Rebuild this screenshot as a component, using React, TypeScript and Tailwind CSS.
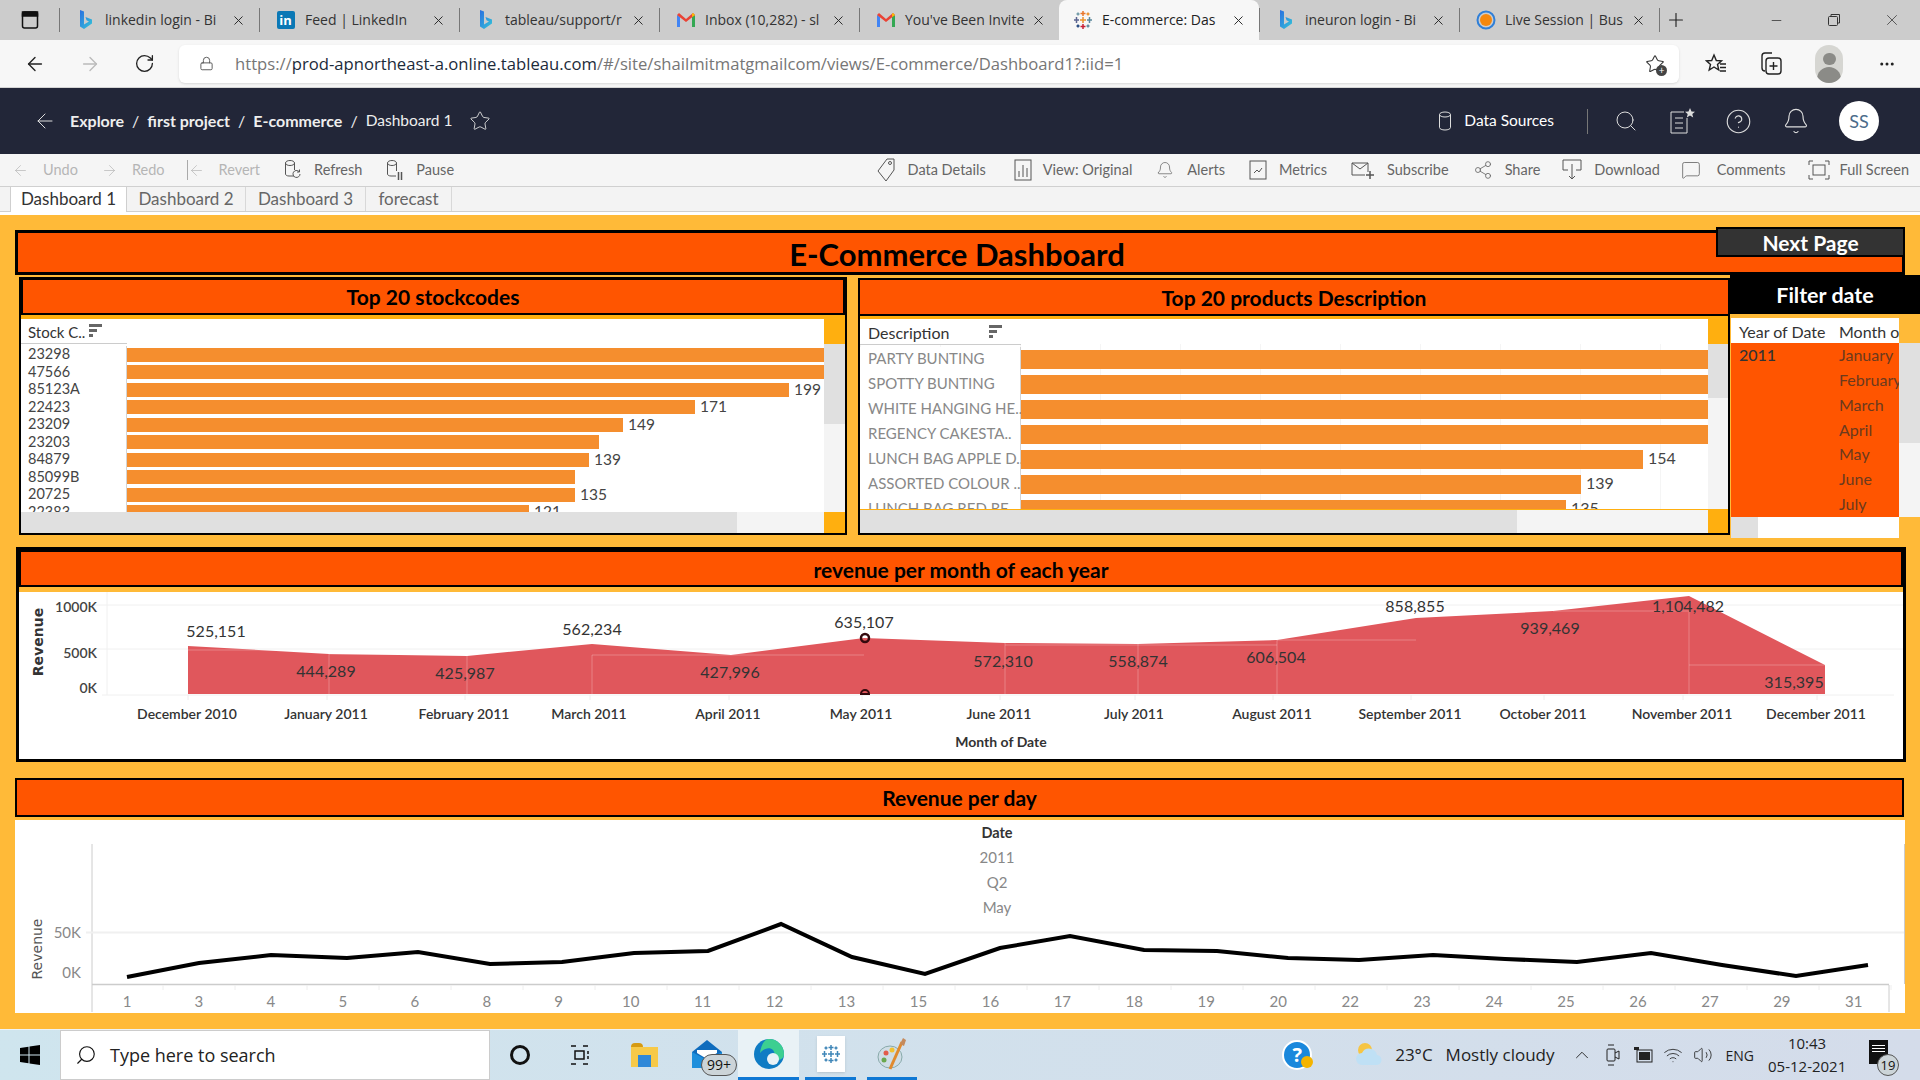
import React from "react";
import {
  ArrowLeft,
  ArrowRight,
  Bell,
  CircleHelp,
  Ellipsis,
  Lock,
  Minus,
  Plus,
  RotateCw,
  Search,
  Star,
  X,
  MessageSquare,
  Share2,
  ChevronUp,
  Volume2,
  Wifi,
} from "lucide-react";

const browserFont = { fontFamily: '"Open Sans", sans-serif' };

const BingIcon = () => (
  <svg width="16" height="22" viewBox="0 0 16 22">
    <defs>
      <linearGradient id="bing" x1="0" y1="0" x2="1" y2="1">
        <stop offset="0" stopColor="#2a6fe0" />
        <stop offset="1" stopColor="#35c6d8" />
      </linearGradient>
    </defs>
    <path d="M2 1l4 1.500v13l5-3-2.500-1.200L7.500 8 14 10.500v4L6 20l-4-2.500z" fill="url(#bing)" />
  </svg>
);

const LinkedinIcon = () => (
  <div className="w-[18px] h-[18px] bg-[#0a78b5] rounded-[2px] text-white text-[13px] font-bold leading-[18px] text-center">in</div>
);

const GmailIcon = () => (
  <svg width="20" height="16" viewBox="0 0 20 16">
    <path d="M1 15V3l3 2v10z" fill="#4285f4" />
    <path d="M19 15V3l-3 2v10z" fill="#34a853" />
    <path d="M1 3l2-2 7 6 7-6 2 2-9 7z" fill="#ea4335" />
    <path d="M16 5l3-2-2-2-1 .800z" fill="#fbbc04" />
  </svg>
);

const TableauIcon = ({ mono = false }: { mono?: boolean }) => {
  const c = (col: string) => (mono ? "#3f86b8" : col);
  return (
    <svg width="20" height="20" viewBox="0 0 20 20" strokeWidth="1.500" fill="none">
      <path d="M10 1v5M7.500 3.500h5" stroke={c("#e8762b")} />
      <path d="M10 14v5M7.500 16.500h5" stroke={c("#c72035")} />
      <path d="M3.500 7v6M1 10h5" stroke={c("#5b6591")} />
      <path d="M16.500 7v6M14 10h5" stroke={c("#59879b")} />
      <path d="M10 7v6M7 10h6" stroke={c("#eb912b")} />
      <path d="M5 2.500v3M3.500 4h3" stroke={c("#7099a6")} />
      <path d="M15 2.500v3M13.500 4h3" stroke={c("#eb912b")} />
      <path d="M5 14.500v3M3.500 16h3" stroke={c("#1f447e")} />
      <path d="M15 14.500v3M13.500 16h3" stroke={c("#5b879b")} />
    </svg>
  );
};

const IneuronIcon = () => (
  <svg width="20" height="22" viewBox="0 0 20 22">
    <circle cx="10" cy="11" r="8.500" fill="none" stroke="#2f7fd8" strokeWidth="2" />
    <circle cx="10" cy="11" r="6" fill="#f5880e" />
  </svg>
);

const Cylinder = ({ stroke = "#555", height = 20 }: { stroke?: string; height?: number }) => (
  <svg width="14" height={height} viewBox={`0 0 14 ${height}`} fill="none" stroke={stroke}>
    <ellipse cx="7" cy="3.500" rx="5.500" ry="2.500" />
    <path d={`M1.500 3.500V${height - 3.5}a5.500 2.500 0 0 0 11 0V3.500`} />
  </svg>
);

const tabs = [
  { icon: <BingIcon />, title: "linkedin login - Bi" },
  { icon: <LinkedinIcon />, title: "Feed | LinkedIn" },
  { icon: <BingIcon />, title: "tableau/support/r" },
  { icon: <GmailIcon />, title: "Inbox (10,282) - sl" },
  { icon: <GmailIcon />, title: "You've Been Invite" },
  { icon: <TableauIcon />, title: "E-commerce: Das", active: true },
  { icon: <BingIcon />, title: "ineuron login - Bi" },
  { icon: <IneuronIcon />, title: "Live Session | Bus" },
];

const BrowserTabs = () => (
  <div className="h-10 bg-[#cccccc] flex items-center text-[14px] text-[#333]" style={browserFont}>
    <div className="w-[59px] flex justify-center pl-[1px]">
      <svg width="18" height="20" viewBox="0 0 18 20" fill="none" stroke="#111" strokeWidth="1.500">
        <rect x="1.500" y="2" width="15" height="16" rx="2" />
        <rect x="1.500" y="2" width="15" height="4" fill="#111" />
      </svg>
    </div>
    {tabs.map((t) => (
      <div
        key={t.title}
        className={
          t.active
            ? "w-[200px] h-10 bg-[#f7f7f7] rounded-t-lg flex items-center pl-[13px] pr-[13px] text-[#222]"
            : "w-[200px] h-[24px] border-l border-[#777] flex items-center pl-[15px] pr-[13px]"
        }
      >
        <div className="w-[21px] flex justify-center shrink-0">{t.icon}</div>
        <div className="ml-[9px] -mt-[2px] whitespace-nowrap">{t.title}</div>
        <X className="ml-auto text-[#222]" size={15} strokeWidth={1.500} />
      </div>
    ))}
    <div className="h-[24px] border-l border-[#777] w-[6px]" />
    <Plus size={22} strokeWidth={1.250} className="text-[#222]" />
    <div className="ml-auto flex items-center text-[#333]">
      <Minus size={15} strokeWidth={1.250} />
      <svg className="ml-[43px]" width="14" height="14" viewBox="0 0 14 14" fill="none" stroke="#333">
        <rect x="1.500" y="3.500" width="9" height="9" rx="1" />
        <path d="M4 3V1.500h8.500V10H11" />
      </svg>
      <X className="ml-[42px] mr-[19px]" size={18} strokeWidth={1} />
    </div>
  </div>
);

const AddressBar = () => (
  <div className="h-12 bg-[#f7f7f7] border-b border-[#d4d4d4] flex items-center" style={browserFont}>
    <ArrowLeft className="ml-[24px] text-[#222]" size={22} strokeWidth={1.500} />
    <ArrowRight className="ml-[33px] text-[#bbb]" size={22} strokeWidth={1.500} />
    <RotateCw className="ml-[33px] text-[#222]" size={21} strokeWidth={1.500} />
    <div className="ml-[24px] w-[1500px] h-[38px] bg-white rounded-md flex items-center shadow-sm">
      <Lock className="ml-[20px] text-[#555]" size={15} strokeWidth={1.500} />
      <div className="ml-[21px] pt-[1px] text-[16.650px] whitespace-nowrap text-[#767676]">
        https://<span className="text-[#1c2b3a]">prod-apnortheast-a.online.tableau.com</span>/#/site/shailmitmatgmailcom/views/E-commerce/Dashboard1?:iid=1
      </div>
      <div className="ml-auto mr-[14px] relative">
        <Star className="text-[#333]" size={20} strokeWidth={1.250} />
        <div className="absolute -right-[2px] -bottom-[2px] w-[11px] h-[11px] rounded-full bg-[#444] text-white text-[10px] leading-[10px] text-center">+</div>
      </div>
    </div>
    <svg className="ml-[26px]" width="22" height="22" viewBox="0 0 22 22" fill="none" stroke="#222" strokeWidth="1.400">
      <path d="M9 2l2.300 5.500 5.200.400-4 3.500 1.300 5.600L9 14l-4.800 3 1.300-5.600-4-3.500 5.200-.400z" />
      <path d="M15 11h6M15 14.500h6M15 18h6" />
    </svg>
    <svg className="ml-[33px]" width="24" height="26" viewBox="0 0 24 26" fill="none" stroke="#222" strokeWidth="1.400">
      <path d="M5 20C3 20 2 19 2 17V5c0-2 1-3 3-3h7" />
      <rect x="6" y="7" width="15" height="16" rx="3" />
      <path d="M13.500 11v8M9.500 15h8" />
    </svg>
    <div className="ml-[31px] w-[28px] h-[38px] rounded-full bg-[#d6d6d2] overflow-hidden flex flex-col items-center pt-[8px]">
      <div className="w-[13px] h-[13px] rounded-full bg-[#8b8b87]" />
      <div className="w-[24px] h-[16px] mt-[2px] rounded-t-full bg-[#8b8b87]" />
    </div>
    <Ellipsis className="ml-[35px] text-[#222]" size={18} />
  </div>
);

const Slash = () => <span className="mx-[8px] font-normal">/</span>;

const TableauNav = () => (
  <div className="h-[66px] bg-[#222638] flex items-center text-white text-[16px]" style={{ fontFamily: '"Lato", sans-serif' }}>
    <ArrowLeft className="ml-[33px] text-[#ddd]" size={24} strokeWidth={1} />
    <div className="ml-[13px] flex items-center font-bold text-[#eee]">
      Explore<Slash />first project<Slash />E-commerce<Slash />
      <span className="font-normal text-[15.500px]">Dashboard 1</span>
    </div>
    <Star className="ml-[17px] text-[#ddd]" size={22} strokeWidth={1} />
    <div className="ml-auto flex items-center">
      <Cylinder stroke="#ddd" height={20} />
      <span className="ml-[12px] text-[15.500px]">Data Sources</span>
      <div className="ml-[33px] h-[25px] w-px bg-[#777]" />
      <Search className="ml-[26px] text-[#ddd]" size={24} strokeWidth={1} />
      <svg className="ml-[30px]" width="28" height="28" viewBox="0 0 28 28" fill="none" stroke="#ddd">
        <path d="M16 5H3v21h16V11M7 11h8M7 16h8M7 21h8" />
        <path d="M22 1l1.500 3.500 3.500.300-2.700 2.200.900 3.500-3.200-1.900-3.200 1.900.900-3.500L17 4.800l3.500-.300z" fill="#ddd" stroke="none" />
      </svg>
      <CircleHelp className="ml-[29px] text-[#ddd]" size={27} strokeWidth={1} />
      <Bell className="ml-[30px] text-[#ddd]" size={28} strokeWidth={1} />
      <div className="ml-[29px] mr-[41px] w-10 h-10 rounded-full bg-white text-[#4a6b8a] text-[18px] flex items-center justify-center">SS</div>
    </div>
  </div>
);

const ToolItem = ({ icon, label, className, dim }: { icon: React.ReactNode; label: string; className?: string; dim?: boolean }) => (
  <div className={`flex items-center ${dim ? "text-[#b5b5b5]" : "text-[#666]"} ${className ?? ""}`}>
    {icon}
    <span>{label}</span>
  </div>
);

const Toolbar = () => (
  <div className="h-[33px] bg-[#f5f5f5] border-b border-[#d0d0d0] flex items-center text-[14.500px] pl-[12px] pr-[11px]" style={{ fontFamily: '"Lato", sans-serif' }}>
    <ToolItem dim className="gap-[14px]" icon={<ArrowLeft size={17} strokeWidth={1} />} label="Undo" />
    <ToolItem dim className="ml-[23px] gap-[14px]" icon={<ArrowRight size={17} strokeWidth={1} />} label="Redo" />
    <ToolItem dim className="ml-[22px] gap-[14px]" icon={<span className="flex items-center"><span className="w-px h-[20px] bg-[#aaa]" /><ArrowLeft size={17} strokeWidth={1} /></span>} label="Revert" />
    <ToolItem className="ml-[24px] gap-[12px]" icon={
      <svg width="18" height="22" viewBox="0 0 18 22" fill="none" stroke="#555"><path d="M10 17H5c-2 0-3.500-.800-3.500-2V4c0-1.500 2-2.500 4.500-2.500s4.500 1 4.500 2.500v7M1.500 4c0 1.500 2 2.500 4.500 2.500s4.500-1 4.500-2.500" /><path d="M16 15a3.500 3.500 0 1 1-1-2.500M15.500 10.500v2.500h-2.500" /></svg>
    } label="Refresh" />
    <ToolItem className="ml-[24px] gap-[12px]" icon={
      <svg width="18" height="22" viewBox="0 0 18 22" fill="none" stroke="#555"><path d="M10 17H5c-2 0-3.500-.800-3.500-2V4c0-1.500 2-2.500 4.500-2.500s4.500 1 4.500 2.500v8M1.500 4c0 1.500 2 2.500 4.500 2.500s4.500-1 4.500-2.500" /><path d="M12.500 13v8M15.500 13v8" strokeWidth="1.500" /></svg>
    } label="Pause" />
    <ToolItem className="ml-auto gap-[13px]" icon={
      <svg width="18" height="24" viewBox="0 0 18 24" fill="none" stroke="#555"><path d="M9 23L1 13 10 1h7v11z" /><circle cx="13" cy="5" r="1.500" /></svg>
    } label="Data Details" />
    <ToolItem className="ml-[28px] gap-[11px]" icon={
      <svg width="18" height="22" viewBox="0 0 18 22" fill="none" stroke="#555"><rect x="1" y="1" width="16" height="20" /><path d="M5 18v-6M9 18V6M13 18V9" /></svg>
    } label="View: Original" />
    <ToolItem className="ml-[24px] gap-[13px]" icon={<Bell size={18} strokeWidth={1} />} label="Alerts" />
    <ToolItem className="ml-[24px] gap-[12px]" icon={
      <svg width="18" height="20" viewBox="0 0 18 20" fill="none" stroke="#555"><rect x="1" y="1" width="16" height="18" /><path d="M5 13l3-3 2 2 3-4" /></svg>
    } label="Metrics" />
    <ToolItem className="ml-[24px] gap-[12px]" icon={
      <svg width="24" height="18" viewBox="0 0 24 18" fill="none" stroke="#555"><path d="M17 11V2H1v12h13M1 2l8 6 8-6" /><path d="M19 10v8M15 14h8" strokeWidth="1.500" /></svg>
    } label="Subscribe" />
    <ToolItem className="ml-[24px] gap-[12px]" icon={<Share2 size={20} strokeWidth={1} />} label="Share" />
    <ToolItem className="ml-[22px] gap-[12px]" icon={
      <svg width="20" height="22" viewBox="0 0 20 22" fill="none" stroke="#555"><path d="M6 11H1V1h18v10h-5M10 5v15M7 17l3 3 3-3" /></svg>
    } label="Download" />
    <ToolItem className="ml-[21px] gap-[16px]" icon={<MessageSquare size={20} strokeWidth={1} />} label="Comments" />
    <ToolItem className="ml-[22px] gap-[10px]" icon={
      <svg width="22" height="20" viewBox="0 0 22 20" fill="none" stroke="#555"><rect x="5" y="5" width="12" height="10" /><path d="M1 5V1h4M17 1h4v4M21 15v4h-4M5 19H1v-4" /></svg>
    } label="Full Screen" />
  </div>
);

const SheetTabs = () => (
  <div className="h-[25px] bg-[#f3f3f3] border-b border-[#cfcfcf] flex pl-[10px] text-[17px] text-[#666]" style={{ fontFamily: '"Lato", sans-serif' }}>
    <div className="w-[117px] h-[25px] bg-white border-x border-[#cfcfcf] text-[#333] text-center leading-[24px]">Dashboard 1</div>
    <div className="w-[119px] border-r border-[#d8d8d8] text-center leading-[24px]">Dashboard 2</div>
    <div className="w-[120px] border-r border-[#d8d8d8] text-center leading-[24px]">Dashboard 3</div>
    <div className="w-[86px] border-r border-[#d8d8d8] text-center leading-[24px]">forecast</div>
  </div>
);

const SortIcon = () => (
  <svg width="13" height="13" viewBox="0 0 13 13" fill="#666">
    <rect x="0" y="0" width="13" height="3" />
    <rect x="0" y="5" width="8" height="3" />
    <rect x="0" y="10" width="4" height="3" />
  </svg>
);

const stockRows: [string, number, string?][] = [
  ["23298", 697],
  ["47566", 697],
  ["85123A", 662, "199"],
  ["22423", 568, "171"],
  ["23209", 496, "149"],
  ["23203", 472],
  ["84879", 462, "139"],
  ["85099B", 448],
  ["20725", 448, "135"],
  ["22383", 402, "121"],
];

const productRows: [string, number, string?][] = [
  ["PARTY BUNTING", 687],
  ["SPOTTY BUNTING", 687],
  ["WHITE HANGING HE..", 687],
  ["REGENCY CAKESTA..", 687],
  ["LUNCH BAG APPLE D..", 622, "154"],
  ["ASSORTED COLOUR ..", 560, "139"],
  ["LUNCH BAG RED RE..", 545, "135"],
];

const Banner = ({ title, className }: { title: string; className?: string }) => (
  <div className={`bg-[#ff5500] border-2 border-black flex items-center justify-center font-bold text-black text-[21px] ${className ?? ""}`}>{title}</div>
);

const HBar = ({ width, className }: { width: number; className: string }) => (
  <div className={`shrink-0 bg-[#f58e2e] ${className}`} style={{ width }} />
);

const StockPanel = () => (
  <div className="w-[828px] h-[258px] ml-[4px] mt-[2px] border-2 border-black flex flex-col bg-[#ffaf0f]">
    <Banner title="Top 20 stockcodes" className="h-[37px] -mt-[1px]" />
    <div className="h-[4px]" />
    <div className="flex h-[193px]">
      <div className="w-[803px] bg-white flex flex-col">
        <div className="h-[24px] flex items-center pl-[7px] pt-[3px] gap-[4px] text-[15px] text-[#333]">
          Stock C.. <span className="-mt-[4px]"><SortIcon /></span>
        </div>
        <div className="flex-1 overflow-hidden">
          <div className="w-[106px] h-px bg-[#ccc]" />
          <div className="pt-[2px]">
            {stockRows.map(([code, w, val]) => (
              <div key={code} className="h-[17.500px] flex items-center text-[14.500px] text-[#444]">
                <div className="w-[106px] h-full border-r border-[#d4d4d4] pl-[7px] leading-[15px]">{code}</div>
                <HBar width={w} className="h-[14px]" />
                {val && <span className="ml-[5px] text-[15.500px] -mt-[1px]">{val}</span>}
              </div>
            ))}
          </div>
        </div>
      </div>
      <div className="flex-1 flex flex-col">
        <div className="h-[25px]" />
        <div className="h-[80px] bg-[#e0e0e0]" />
        <div className="flex-1 bg-[#f4f4f4]" />
      </div>
    </div>
    <div className="flex flex-1">
      <div className="w-[803px] bg-[#f4f4f4]">
        <div className="w-[716px] h-full bg-[#e0e0e0]" />
      </div>
    </div>
  </div>
);

const ProductPanel = () => (
  <div className="w-[872px] h-[257px] ml-[11px] mt-[3px] border-x-2 border-b-2 border-black flex flex-col bg-[#ffaf0f]">
    <Banner title="Top 20 products Description" className="h-[38px] -mx-[2px] pt-[2px]" />
    <div className="h-[3px]" />
    <div className="flex h-[190px]">
      <div className="w-[848px] bg-white flex flex-col">
        <div className="h-[25px] flex items-center pl-[8px] pt-[3px] text-[16px] text-[#333]">
          <span className="w-[121px]">Description</span>
          <span className="-mt-[4px]"><SortIcon /></span>
        </div>
        <div className="flex-1 overflow-hidden bg-[repeating-linear-gradient(90deg,#f5f5f5_0,#f5f5f5_1px,transparent_1px,transparent_80px)]">
          <div className="w-[161px] h-px bg-[#ccc]" />
          <div className="pt-[2px]">
            {productRows.map(([name, w, val]) => (
              <div key={name} className="h-[25px] flex items-center text-[15px]">
                <div className="w-[161px] h-full bg-white border-r border-[#d4d4d4] pl-[8px] leading-[22px] text-[#888] whitespace-nowrap">{name}</div>
                <HBar width={w} className="h-[19px]" />
                {val && <span className="ml-[5px] text-[#444] text-[16px] -mt-[3px]">{val}</span>}
              </div>
            ))}
          </div>
        </div>
      </div>
      <div className="flex-1 flex flex-col">
        <div className="h-[25px]" />
        <div className="h-[54px] bg-[#e0e0e0]" />
        <div className="flex-1 bg-[#f4f4f4]" />
      </div>
    </div>
    <div className="flex flex-1 border-t border-[#ffaf0f]">
      <div className="w-[848px] bg-[#f4f4f4]">
        <div className="w-[657px] h-full bg-[#e0e0e0]" />
      </div>
    </div>
  </div>
);

const months = ["January", "February", "March", "April", "May", "June", "July"];

const FilterPanel = () => (
  <div className="w-[190px] flex flex-col">
    <div className="h-[39px] bg-black text-white font-bold text-[21.500px] flex items-center justify-center pt-[2px]">Filter date</div>
    <div className="h-[4px]" />
    <div className="flex">
      <div className="ml-[1px] w-[168px] flex flex-col">
        <div className="h-[25px] bg-white flex items-center pt-[2px] text-[16px] text-[#333] whitespace-nowrap">
          <span className="w-[108px] pl-[8px] shrink-0">Year of Date</span>
          <span>Month o</span>
        </div>
        <div className="h-[174px] bg-[#ff5500] flex text-[16px] overflow-hidden">
          <div className="w-[108px] pl-[8px] shrink-0 text-[#333] font-medium leading-[23px]">2011</div>
          <div className="flex flex-col text-[#6b3a1e]">
            {months.map((m) => (
              <div key={m} className="h-[25px] leading-[23px]">{m}</div>
            ))}
          </div>
        </div>
        <div className="h-[21px] bg-white">
          <div className="w-[27px] h-full bg-[#e0e0e0]" />
        </div>
      </div>
      <div className="w-[21px] flex flex-col">
        <div className="h-[25px]" />
        <div className="h-[100px] bg-[#e0e0e0]" />
        <div className="h-[74px] bg-[#f4f4f4]" />
      </div>
    </div>
  </div>
);

const monthTicks: [string, number][] = [
  ["December 2010", 186], ["January 2011", 325], ["February 2011", 463], ["March 2011", 588], ["April 2011", 727],
  ["May 2011", 860], ["June 2011", 998], ["July 2011", 1133], ["August 2011", 1271], ["September 2011", 1409],
  ["October 2011", 1542], ["November 2011", 1681], ["December 2011", 1815],
];

const areaLabels: [string, number, number][] = [
  ["525,151", 215, 632], ["444,289", 325, 672], ["425,987", 464, 674], ["562,234", 591, 630], ["427,996", 729, 673],
  ["635,107", 863, 623], ["572,310", 1002, 662], ["558,874", 1137, 662], ["606,504", 1275, 658], ["858,855", 1414, 607],
  ["939,469", 1549, 629], ["1,104,482", 1687, 607], ["315,395", 1793, 683],
];

const chartFont = { fontFamily: "Lato, sans-serif" };

// svg origin is page (17,592) for the monthly chart
const MonthlyChart = () => (
  <svg width="1886" height="167" viewBox="17 592 1886 167" style={chartFont}>
    <path d="M105 592V695M90 605H1903M90 649H1903M100 695H1892" stroke="#f0f0f0" fill="none" />
    <path d="M186 646L327 654L465 656L590 644L729 655L862 638L1003 643L1136 644L1275 640L1414 618L1551 611L1687 596L1823 665V694H186Z" fill="#e0575c" />
    <path d="M186 650H330M327 654H465M590 655H862M1003 645H1136M1136 645H1275M1275 640H1414M1551 611H1687M1687 665H1823M327 654V694M465 656V694M590 655V694M1003 643V694M1136 644V694M1275 640V694M1687 611V694" stroke="#ffffff" strokeOpacity="0.25" fill="none" />
    <circle cx="863" cy="638" r="4" fill="none" stroke="#33090d" strokeWidth="2.500" />
    <path d="M859 694a4 4 0 0 1 8 0z" fill="none" stroke="#33090d" strokeWidth="2" />
    {monthTicks.map(([, x]) => (
      <path key={x} d={`M${x} 695v5`} stroke="#eee" />
    ))}
    <text x="0" y="0" transform="translate(41 642) rotate(-90)" textAnchor="middle" fontSize="14" fontWeight="700" fill="#333" style={{ fontFamily: '"DejaVu Sans", sans-serif' }}>Revenue</text>
    {[["1000K", 612], ["500K", 658], ["0K", 693]].map(([t, y]) => (
      <text key={t} x="95" y={y} textAnchor="end" fontSize="14" fontWeight="600" fill="#444">{t}</text>
    ))}
    {areaLabels.map(([t, x, y]) => (
      <text key={t} x={x - 1} y={y + 5} textAnchor="middle" fontSize="16" fill="#333">{t}</text>
    ))}
    {monthTicks.map(([t, x]) => (
      <text key={t} x={x - 1} y="719" textAnchor="middle" fontSize="14" fontWeight="600" fill="#333">{t}</text>
    ))}
    <text x="999" y="747" textAnchor="middle" fontSize="14" fontWeight="700" fill="#333">Month of Date</text>
  </svg>
);

const dayLabels = ["1", "3", "4", "5", "6", "8", "9", "10", "11", "12", "13", "15", "16", "17", "18", "19", "20", "22", "23", "24", "25", "26", "27", "29", "31"];
const dayPts: [number, number][] = [
  [127, 977], [199, 963], [271, 955], [347, 958], [418, 952], [490, 964], [562, 962], [634, 953], [708, 951], [781, 924], [852, 957], [925, 974],
  [1000, 948], [1070, 936], [1144, 950], [1217, 951], [1288, 958], [1359, 960], [1433, 955], [1505, 959], [1577, 962], [1651, 953], [1722, 965], [1796, 976], [1868, 965],
];

// svg origin is page (15,820) for the daily chart
const DailyChart = () => (
  <svg width="1890" height="193" viewBox="15 820 1890 193" style={chartFont}>
    <path d="M92 844V1012M1904.500 844V984M1889 985V1012" stroke="#ccc" fill="none" />
    <path d="M86 932.500H1904" stroke="#f0f0f0" strokeWidth="2" />
    <path d="M92 984.500H1889" stroke="#ccc" strokeWidth="1.500" />
    {dayLabels.map((_, i) => (
      <path key={i} d={`M${163 + i * 72} 985v5`} stroke="#eee" />
    ))}
    <polyline points={dayPts.map((p) => p.join(",")).join(" ")} fill="none" stroke="#000" strokeWidth="4" strokeLinejoin="miter" />
    <text transform="translate(42 949) rotate(-90)" textAnchor="middle" fontSize="14" fill="#555" style={{ fontFamily: '"DejaVu Sans", sans-serif' }}>Revenue</text>
    <text x="81" y="938" textAnchor="end" fontSize="15" fill="#888">50K</text>
    <text x="81" y="978" textAnchor="end" fontSize="15" fill="#888">0K</text>
    {dayLabels.map((d, i) => (
      <text key={d} x={127 + i * 71.950} y="1007" textAnchor="middle" fontSize="15" fill="#888">{d}</text>
    ))}
    <text x="997" y="838" textAnchor="middle" fontSize="14.500" fontWeight="700" fill="#333">Date</text>
    <text x="997" y="863" textAnchor="middle" fontSize="15" fill="#888">2011</text>
    <text x="997" y="888" textAnchor="middle" fontSize="15" fill="#888">Q2</text>
    <text x="997" y="913" textAnchor="middle" fontSize="15" fill="#888">May</text>
  </svg>
);

const Dashboard = () => (
  <div className="h-[814px] mt-[3px] bg-[#ffba38] pt-[15px] pl-[15px] relative overflow-hidden" style={{ fontFamily: "Lato, sans-serif" }}>
    <div className="w-[1890px] h-[45px] bg-[#ff5500] border-[3px] border-black flex items-center justify-center font-bold text-black text-[31px] pt-[4px] pr-[6px]">
      E-Commerce Dashboard
    </div>
    <div className="absolute left-[1716px] top-[12px] w-[189px] h-[30px] bg-[#333] border-2 border-black text-white font-bold text-[21px] flex items-center justify-center pt-[1px]">Next Page</div>
    <div className="flex h-[263px] w-[1905px]">
      <StockPanel />
      <ProductPanel />
      <FilterPanel />
    </div>
    <div className="mt-[9px] ml-[1px] w-[1890px] h-[215px] border-[3px] border-black flex flex-col">
      <Banner title="revenue per month of each year" className="h-[37px] pt-[2px]" />
      <div className="h-[5px]" />
      <div className="flex-1 bg-white overflow-hidden">
        <MonthlyChart />
      </div>
    </div>
    <Banner title="Revenue per day" className="mt-[16px] w-[1889px] h-[39px]" />
    <div className="mt-[3px] w-[1890px] h-[193px] bg-white">
      <DailyChart />
    </div>
  </div>
);

const Taskbar = () => (
  <div className="h-[51px] bg-gradient-to-r from-[#cfe5ee] to-[#d4dcea] flex items-center border-t border-[#eef3f5]" style={browserFont}>
    <div className="w-[60px] flex justify-center">
      <svg width="20" height="20" viewBox="0 0 20 20" fill="#000">
        <path d="M0 3l8.500-1.200V9.500H0zM9.500 1.600L20 0v9.500H9.500zM0 10.500h8.500v7.700L0 17zM9.500 10.500H20V20L9.500 18.400z" />
      </svg>
    </div>
    <div className="w-[430px] h-[50px] bg-white border border-[#ccc] flex items-center">
      <Search className="ml-[14px] -scale-x-100 text-[#111]" size={22} strokeWidth={1.250} />
      <span className="ml-[13px] text-[18px] text-[#222]">Type here to search</span>
    </div>
    <div className="w-[20px]" />
    <div className="w-[20px] h-[20px] rounded-full border-[3px] border-[#111]" />
    <svg className="ml-[40px]" width="20" height="20" viewBox="0 0 20 20" fill="none" stroke="#111" strokeWidth="1.500">
      <path d="M1 1h5M1 19h5M5 6h9v8H5zM13 1h5M13 19h5M18 6v3M18 11v3" />
    </svg>
    <div className="ml-[41px] relative w-[27px] h-[24px]">
      <div className="absolute left-0 top-0 w-[12px] h-[6px] bg-[#d69a12] rounded-t-sm" />
      <div className="absolute left-0 top-[4px] w-[27px] h-[20px] bg-[#f7c948]" />
      <div className="absolute left-[7px] top-[12px] w-[13px] h-[12px] bg-[#2f88d8]" />
    </div>
    <div className="ml-[34px] relative w-[36px] h-[44px]">
      <svg className="absolute left-0 top-[7px]" width="30" height="30" viewBox="0 0 30 30">
        <path d="M0 12h30v16H0z" fill="#1e8fdc" />
        <path d="M0 12L15 0l15 12-15 8z" fill="#0f6cbd" />
        <path d="M5 10h20v3l-10 6-10-6z" fill="#fff" />
      </svg>
      <div className="absolute left-[9px] top-[21px] w-[36px] h-[22px] rounded-full bg-[#ccd4d8] border border-[#555] text-[14px] leading-[20px] text-center text-[#111]">99+</div>
    </div>
    <div className="ml-[10px] w-[61px] h-[50px] bg-[#e9f2f6] border-b-[3px] border-[#0f78d4] flex items-center justify-center">
      <svg width="30" height="32" viewBox="0 0 30 32">
        <circle cx="15" cy="16" r="15" fill="#0f7cc4" />
        <path d="M15 1a15 15 0 0 1 15 15c0 4-3 6-7 6h-6c3-4 5-6 2-10-3-3-9-2-13 3C7 8 10 1 15 1z" fill="#3ccf91" />
        <circle cx="19" cy="21" r="6" fill="#e9f2f6" />
      </svg>
    </div>
    <div className="ml-[6px] w-[51px] h-[50px] border-b-[3px] border-[#0f78d4] flex items-center justify-center">
      <div className="w-[28px] h-[36px] bg-white shadow flex items-center justify-center"><TableauIcon mono /></div>
    </div>
    <div className="ml-[11px] w-[50px] h-[50px] border-b-[3px] border-[#0f78d4] flex items-center justify-center">
      <svg width="30" height="36" viewBox="0 0 30 36">
        <ellipse cx="13" cy="21" rx="12" ry="11" fill="#cfdde6" stroke="#8aa" />
        <circle cx="9" cy="17" r="2.500" fill="#e25b4a" />
        <circle cx="15" cy="14" r="2.500" fill="#f1c232" />
        <circle cx="7" cy="24" r="2.500" fill="#6aa84f" />
        <path d="M13 33L25 6" stroke="#e08a2e" strokeWidth="3" />
        <path d="M23 8l3-6 3 2-2 6z" fill="#c58a5c" />
      </svg>
    </div>
    <div className="ml-auto flex items-center text-[#222]">
      <div className="relative w-[30px] h-[30px] rounded-full bg-[#1a88dc] border-2 border-white text-white font-bold text-[20px] leading-[26px] text-center">
        ?
        <div className="absolute -right-[3px] bottom-0 w-[12px] h-[12px] rounded-full bg-[#f4b400]" />
      </div>
      <svg className="ml-[42px]" width="30" height="30" viewBox="0 0 30 30">
        <circle cx="11" cy="10" r="7" fill="#f6c544" />
        <path d="M8 25a6 6 0 0 1 0-12 8 8 0 0 1 15 2 5 5 0 0 1-1 10z" fill="#bfe0f5" />
      </svg>
      <span className="ml-[11px] text-[17px]">23°C</span>
      <span className="ml-[13px] text-[17px]">Mostly cloudy</span>
      <ChevronUp className="ml-[16px]" size={22} strokeWidth={1} />
      <svg className="ml-[12px]" width="16" height="24" viewBox="0 0 16 24" fill="none" stroke="#222">
        <rect x="2" y="6" width="8" height="12" rx="1" /><path d="M10 10l4-2v8l-4-2M3 2h6M3 22h6" />
      </svg>
      <svg className="ml-[12px]" width="20" height="18" viewBox="0 0 20 18">
        <path d="M1 1h5v3H1z" fill="#222" /><rect x="4" y="4" width="15" height="12" fill="none" stroke="#222" /><rect x="6" y="6" width="11" height="8" fill="#222" />
      </svg>
      <Wifi className="ml-[10px]" size={20} strokeWidth={1} />
      <Volume2 className="ml-[10px]" size={20} strokeWidth={1} />
      <span className="ml-[13px] text-[14px]">ENG</span>
      <div className="ml-[14px] w-[78px] text-center text-[15px] leading-[23px] whitespace-nowrap">
        <div>10:43</div>
        <div>05-12-2021</div>
      </div>
      <div className="ml-[23px] mr-[27px] relative w-[24px] h-[30px]">
        <div className="w-[19px] h-[24px] bg-[#111] flex flex-col gap-[2px] pt-[5px] px-[3px]">
          <div className="h-px bg-white" /><div className="h-px bg-white" /><div className="h-px bg-white" />
        </div>
        <div className="absolute left-[8px] top-[14px] w-[22px] h-[22px] rounded-full bg-[#ccd4d8] border border-[#555] text-[13px] leading-[20px] text-center text-[#111]">19</div>
      </div>
    </div>
  </div>
);

const App = () => {
  return (
    <div className="w-[1920px] h-[1080px] overflow-hidden bg-white flex flex-col">
      <BrowserTabs />
      <AddressBar />
      <TableauNav />
      <Toolbar />
      <SheetTabs />
      <Dashboard />
      <Taskbar />
    </div>
  );
};

export default App;
